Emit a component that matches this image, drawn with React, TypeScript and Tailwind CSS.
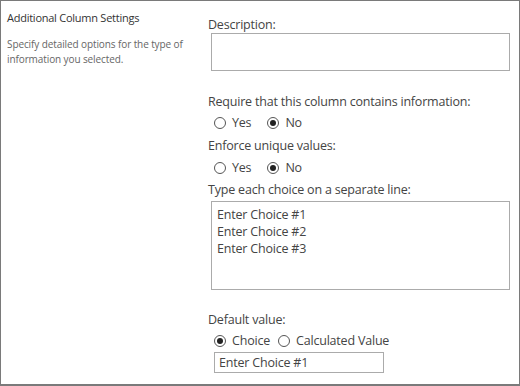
function Radio({ checked }: { checked?: boolean }) {
  return (
    <span className="inline-flex items-center justify-center w-[12px] h-[12px] rounded-full border border-[#555] bg-white shrink-0">
      {checked && <span className="w-[6px] h-[6px] rounded-full bg-[#222]" />}
    </span>
  );
}

function RadioOption({ label, checked }: { label: string; checked?: boolean }) {
  return (
    <label className="flex items-center gap-[6px]">
      <Radio checked={checked} />
      <span>{label}</span>
    </label>
  );
}

export default function App() {
  return (
    <div
      className="w-[520px] h-[386px] bg-white border border-[#7a7a7a] border-b-2 flex text-[#444]"
      style={{ fontFamily: '"Open Sans", "Noto Sans", sans-serif' }}
    >
      <div className="w-[207px] shrink-0 pl-[6px] pt-[10px]">
        <h2 className="text-[11px] leading-[14px] tracking-[-0.25px] text-[#333]">Additional Column Settings</h2>
        <p className="mt-[12px] text-[10px] leading-[15px] tracking-[-0.1px] text-[#666] pr-4">
          Specify detailed options for the type of information you selected.
        </p>
      </div>

      <div className="flex-1 flex flex-col text-[12.5px] leading-[17px] tracking-[-0.2px] pt-[15px]">
        <div>Description:</div>
        <textarea className="ml-[3px] mt-0 w-[299px] h-[38px] border border-[#ababab] resize-none outline-none" />

        <div className="mt-[22px]">Require that this column contains information:</div>
        <div className="mt-[4px] ml-[6px] flex items-center gap-[16px]">
          <RadioOption label="Yes" />
          <RadioOption label="No" checked />
        </div>

        <div className="mt-[6px]">Enforce unique values:</div>
        <div className="mt-[5px] ml-[6px] flex items-center gap-[16px]">
          <RadioOption label="Yes" />
          <RadioOption label="No" checked />
        </div>

        <div className="mt-[5px]">Type each choice on a separate line:</div>
        <div className="ml-[3px] mt-[3px] w-[299px] h-[89px] border border-[#ababab] pl-[5px] pt-[4px]">
          <div>Enter Choice #1</div>
          <div>Enter Choice #2</div>
          <div>Enter Choice #3</div>
        </div>

        <div className="mt-[21px]">Default value:</div>
        <div className="mt-[4px] ml-[6px] flex items-center gap-[8px]">
          <RadioOption label="Choice" checked />
          <RadioOption label="Calculated Value" />
        </div>
        <div className="ml-[6px] mt-[3px] w-[170px] h-[21px] border border-[#ababab] pl-[4px] flex items-center">
          Enter Choice #1
        </div>
      </div>
    </div>
  );
}
